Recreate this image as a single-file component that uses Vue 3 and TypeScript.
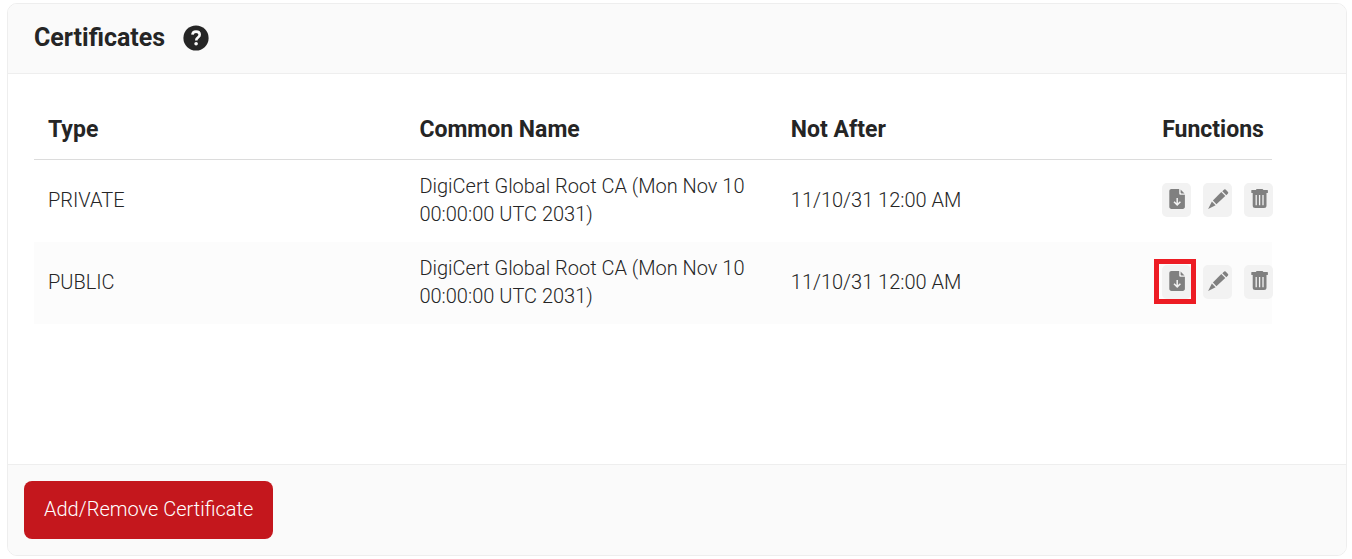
<script setup lang="ts">
interface Certificate {
  type: string
  commonName: string
  notAfter: string
  highlighted: boolean
}

const columns: string[] = ['Type', 'Common Name', 'Not After', 'Functions']

const certificates: Certificate[] = [
  {
    type: 'PRIVATE',
    commonName: 'DigiCert Global Root CA (Mon Nov 10 00:00:00 UTC 2031)',
    notAfter: '11/10/31 12:00 AM',
    highlighted: false,
  },
  {
    type: 'PUBLIC',
    commonName: 'DigiCert Global Root CA (Mon Nov 10 00:00:00 UTC 2031)',
    notAfter: '11/10/31 12:00 AM',
    highlighted: true,
  },
]
</script>

<template>
  <section class="card">
    <header class="card-header">
      <h1>Certificates</h1>
      <button class="help" type="button" aria-label="Help">
        <svg viewBox="0 0 26 26" width="26" height="26">
          <circle cx="13" cy="13" r="12.6" fill="#252525" />
          <path d="M9.400 9.700C9.600 7.600 11 6.600 13 6.600c2.200 0 3.700 1.200 3.700 3.100 0 2.900-3.500 2.700-3.500 5.700" fill="none" stroke="#fafafa" stroke-width="2.600" />
          <circle cx="13.100" cy="18.800" r="1.800" fill="#fafafa" />
        </svg>
      </button>
    </header>

    <div class="card-body">
      <table>
        <thead>
          <tr>
            <th v-for="column in columns" :key="column" scope="col">{{ column }}</th>
          </tr>
        </thead>
        <tbody>
          <tr v-for="cert in certificates" :key="cert.type">
            <td>{{ cert.type }}</td>
            <td>{{ cert.commonName }}</td>
            <td>{{ cert.notAfter }}</td>
            <td>
              <div class="functions">
                <button class="tool" :class="{ highlighted: cert.highlighted }" type="button" aria-label="Download">
                  <svg viewBox="0 0 22 22" width="22" height="22">
                    <path d="M5.500 1h7.700v4.200c0 1 .6 1.600 1.600 1.600h4.100v12c0 1.300-.9 2.200-2.200 2.200H5.500c-1.300 0-2.200-.9-2.200-2.200V3.200C3.300 1.900 4.200 1 5.500 1z" fill="#808080" />
                    <path d="M14.600 1.400L18.500 5.400h-3.100c-.5 0-.8-.3-.8-.8z" fill="#808080" />
                    <path d="M11.200 10v6.500M8 13.700l3.200 3.200 3.200-3.200" fill="none" stroke="#f2f2f2" stroke-width="1.500" />
                  </svg>
                </button>
                <button class="tool" type="button" aria-label="Edit">
                  <svg viewBox="0 0 22 22" width="22" height="22">
                    <g fill="#808080">
                      <path d="M17.200 1.500q.7-.7 1.400 0l2.400 2.600q.6.7 0 1.400L19.300 7.200 15.300 3.200z" />
                      <path d="M14.300 4L18.300 8.100 9.400 16.300 5.900 12.500z" />
                      <path d="M4.900 13.400L8.600 17.200 1.100 21z" />
                    </g>
                  </svg>
                </button>
                <button class="tool" type="button" aria-label="Delete">
                  <svg viewBox="0 0 22 22" width="22" height="22">
                    <path d="M3.800 2h4q.3-1 1.300-1h5q1 0 1.300 1h4q.5 0 .5.500v2q0 .5-.5.500h-.9v12.500q0 2.500-2.500 2.500H7.200q-2.500 0-2.500-2.500V5h-.9q-.5 0-.5-.5v-2q0-.5.5-.5z" fill="#808080" />
                    <path d="M8.200 7v10.200M11.600 7v10.200M15 7v10.200" fill="none" stroke="#f2f2f2" stroke-width="1.300" />
                  </svg>
                </button>
              </div>
            </td>
          </tr>
        </tbody>
      </table>
    </div>

    <footer class="card-footer">
      <button class="primary" type="button">Add/Remove Certificate</button>
    </footer>
  </section>
</template>

<style>
body {
  background: #fff;
}
</style>

<style scoped>
.card {
  margin: 3px 5px 3px 7px;
  border: 1px solid #eee;
  border-radius: 10px;
  overflow: hidden;
  color: #252525;
  background: #fff;
  font-family: Roboto, "Liberation Sans", sans-serif;
  font-size: 20px;
  font-weight: 300;
  line-height: 28px;
}

.card-header {
  display: flex;
  align-items: center;
  gap: 18px;
  padding: 17px 26px 18px;
  border-bottom: 1px solid #eee;
  background: #fafafa;
}

h1 {
  margin: 0;
  font-size: 25px;
  font-weight: 700;
  line-height: 34px;
}

button {
  border: 0;
  font: inherit;
  cursor: pointer;
}

.help {
  padding: 0;
  background: none;
}

svg {
  display: block;
}

.card-body {
  min-height: 340px;
  padding: 25px 74px 25px 26px;
}

table {
  width: 100%;
  border-collapse: collapse;
  table-layout: fixed;
}

th {
  box-sizing: border-box;
  width: 30%;
  padding: 16px 14px 14px;
  border-bottom: 1px solid #dcdcdc;
  font-size: 23px;
  font-weight: 700;
  line-height: 30px;
  text-align: left;
  white-space: nowrap;
}

th:last-child {
  width: 10%;
}

td {
  padding: 12px 14px 14px;
  vertical-align: middle;
}

tbody tr:nth-child(even) {
  background: #fcfcfc;
}

.functions {
  display: flex;
  gap: 12px;
}

.tool {
  position: relative;
  display: flex;
  flex: none;
  justify-content: center;
  width: 29px;
  height: 34px;
  padding: 5px 0;
  border-radius: 5px;
  background: #f2f2f2;
}

.tool svg {
  flex: none;
}

.highlighted::after {
  content: "";
  position: absolute;
  inset: -6px -5px -5px -8px;
  border: 5px solid #ed1c24;
}

.card-footer {
  padding: 16px;
  border-top: 1px solid #eee;
  background: #fafafa;
}

.primary {
  display: block;
  padding: 14px 20px 16px;
  border-radius: 8px;
  color: #fff;
  background: #c4171d;
}
</style>
